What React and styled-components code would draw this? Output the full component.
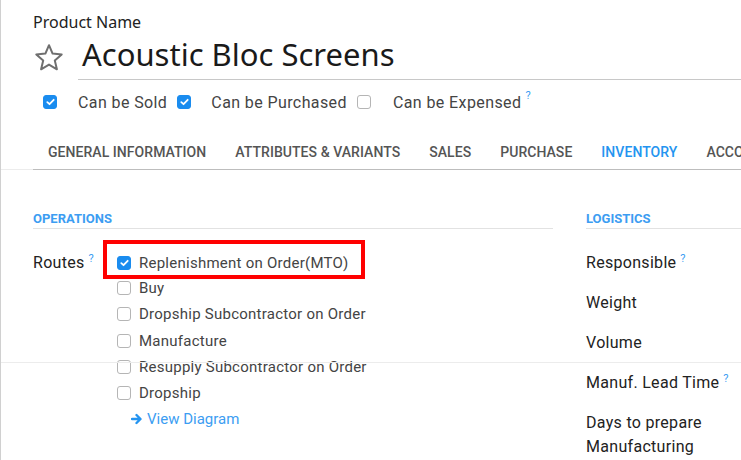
import styled, { createGlobalStyle } from 'styled-components'

const GlobalStyle = createGlobalStyle`
  html, body {
    margin: 0;
    padding: 0;
    background: #fff;
  }
  body {
    font-family: Roboto, "Liberation Sans", sans-serif;
    color: #222;
  }
`

const Page = styled.div`
  position: relative;
  width: 741px;
  height: 460px;
  overflow: hidden;
  box-sizing: border-box;
  border-left: 1px solid #d0d0d0;
  background: #fff;
`

const Seam = styled.div`
  position: absolute;
  left: 0;
  right: 0;
  top: 362px;
  height: 1px;
  background: #ececec;
`

const Head = styled.div`
  padding: 13px 0 0 32px;
`

const FieldLabel = styled.div`
  font-family: "Noto Sans", Roboto, sans-serif;
  font-size: 16px;
  line-height: 18px;
  color: #222;
`

const TitleRow = styled.div`
  display: flex;
  align-items: center;
  margin-top: 4px;
`

const Star = styled.svg`
  width: 32px;
  height: 32px;
  flex: none;
`

const Title = styled.div`
  flex: 1;
  margin-left: 13px;
  padding: 0 0 6px 4px;
  border-bottom: 1px solid #c8c8c8;
  font-family: "Noto Sans", Roboto, sans-serif;
  font-size: 31px;
  line-height: 38px;
  color: #1a1a1a;
`

const Flags = styled.div`
  display: flex;
  align-items: center;
  margin: 12px 0 0 10px;
  height: 20px;
`

const Box = styled.span`
  display: inline-flex;
  align-items: center;
  justify-content: center;
  width: 14px;
  height: 14px;
  box-sizing: border-box;
  flex: none;
  border-radius: 3px;
  border: 1px solid ${p => (p.$on ? '#1a8cef' : '#b5b5b5')};
  background: ${p => (p.$on ? '#1a8cef' : '#fff')};
`

const FlagText = styled.span`
  font-size: 16px;
  letter-spacing: 0.4px;
  color: #444;
  margin: 0 ${p => (p.$last ? 0 : 10)}px 0 ${p => p.$before || 21}px;
`

const Help = styled.span`
  font-size: 11px;
  line-height: 0;
  color: #3c9df2;
  margin-left: 4px;
  position: relative;
  top: -6px;
`

const TabsWrap = styled.div`
  margin-top: 23px;
  border-bottom: 1px solid #ececec;
`

const TabList = styled.div`
  display: flex;
  margin-left: 32px;
  margin-bottom: -1px;
  padding-left: 15px;
  gap: 29px;
  height: 34px;
  align-items: center;
  border-bottom: 1px solid #bdbdbd;
  white-space: nowrap;
`

const Tab = styled.div`
  font-size: 14px;
  font-weight: 500;
  letter-spacing: 0.05px;
  color: ${p => (p.$active ? '#2494f0' : '#555')};
`

const Body = styled.div`
  display: grid;
  grid-template-columns: 520px 1fr;
  column-gap: 33px;
  padding: 41px 0 0 32px;
`

const Group = styled.div``

const GroupTitle = styled.div`
  font-size: 13px;
  font-weight: 700;
  color: #3c9df2;
  padding-bottom: 1px;
  border-bottom: 1px solid #e2e2e2;
  line-height: 16px;
`

const RouteField = styled.div`
  display: grid;
  grid-template-columns: 84px 1fr;
  margin-top: 11px;
`

const Label = styled.div`
  font-size: 16px;
  letter-spacing: 0.3px;
  color: #222;
  line-height: 20px;
  padding-top: ${p => p.$top || 0}px;
`

const Options = styled.div`
  display: flex;
  flex-direction: column;
`

const Highlight = styled.div`
  margin: 0 0 -4px -14px;
  width: 262px;
  height: 39px;
  box-sizing: border-box;
  border: 4px solid #ff0000;
  padding: 6px 0 0 10px;
`

const Option = styled.div`
  display: flex;
  align-items: center;
  height: 26.3px;
  font-size: 15px;
  letter-spacing: 0.25px;
  color: #444;
  span + span {
    margin-left: 8px;
  }
`

const DiagramLink = styled.div`
  display: flex;
  align-items: center;
  height: 26px;
  margin-left: 14px;
  font-size: 15px;
  color: #3c9df2;
  svg {
    margin-right: 4px;
  }
`

const InfoList = styled.div`
  display: flex;
  flex-direction: column;
  margin-top: 22px;
`

const InfoRow = styled.div`
  font-size: 16px;
  letter-spacing: 0.3px;
  line-height: 24px;
  color: #222;
  min-height: 40px;
`

const Check = () => (
  <svg width="9" height="8" viewBox="0 0 9 8">
    <path d="M1.3 4.2 L3.5 6.2 L7.7 1.8" fill="none" stroke="#fff" strokeWidth="1.8" strokeLinecap="round" strokeLinejoin="round" />
  </svg>
)

const CheckBox = ({ on }) => <Box $on={on}>{on && <Check />}</Box>

const routes = [
  'Buy',
  'Dropship Subcontractor on Order',
  'Manufacture',
  'Resupply Subcontractor on Order',
  'Dropship',
]

export default function App() {
  return (
    <>
      <GlobalStyle />
      <Page>
        <Head>
          <FieldLabel>Product Name</FieldLabel>
          <TitleRow>
            <Star viewBox="0 0 32 32">
              <path
                d="M16 3.2 L19.6 11.6 L28.7 12.4 L21.8 18.4 L23.9 27.3 L16 22.6 L8.1 27.3 L10.2 18.4 L3.3 12.4 L12.4 11.6 Z"
                fill="none"
                stroke="#6f6f6f"
                strokeWidth="2"
                strokeLinejoin="round"
              />
            </Star>
            <Title>Acoustic Bloc Screens</Title>
          </TitleRow>
          <Flags>
            <CheckBox on />
            <FlagText>Can be Sold</FlagText>
            <CheckBox on />
            <FlagText $before={20}>Can be Purchased</FlagText>
            <CheckBox />
            <FlagText $before={22} $last>Can be Expensed</FlagText>
            <Help>?</Help>
          </Flags>
        </Head>

        <TabsWrap>
          <TabList>
            <Tab>GENERAL INFORMATION</Tab>
            <Tab>ATTRIBUTES &amp; VARIANTS</Tab>
            <Tab>SALES</Tab>
            <Tab>PURCHASE</Tab>
            <Tab $active>INVENTORY</Tab>
            <Tab>ACCOUNTING</Tab>
          </TabList>
        </TabsWrap>

        <Body>
          <Group>
            <GroupTitle>OPERATIONS</GroupTitle>
            <RouteField>
              <Label $top={13}>
                Routes<Help>?</Help>
              </Label>
              <Options>
                <Highlight>
                  <Option>
                    <CheckBox on />
                    <span>Replenishment on Order(MTO)</span>
                  </Option>
                </Highlight>
                {routes.map(r => (
                  <Option key={r}>
                    <CheckBox />
                    <span>{r}</span>
                  </Option>
                ))}
                <DiagramLink>
                  <svg width="12" height="12" viewBox="0 0 12 12">
                    <path d="M1 6 H9 M5.5 2 L9.5 6 L5.5 10" fill="none" stroke="#2494f0" strokeWidth="2.4" strokeLinecap="round" strokeLinejoin="round" />
                  </svg>
                  View Diagram
                </DiagramLink>
              </Options>
            </RouteField>
          </Group>

          <Group>
            <GroupTitle>LOGISTICS</GroupTitle>
            <InfoList>
              <InfoRow>
                Responsible<Help>?</Help>
              </InfoRow>
              <InfoRow>Weight</InfoRow>
              <InfoRow>Volume</InfoRow>
              <InfoRow>
                Manuf. Lead Time<Help>?</Help>
              </InfoRow>
              <InfoRow>
                Days to prepare
                <br />
                Manufacturing
              </InfoRow>
            </InfoList>
          </Group>
        </Body>
        <Seam />
      </Page>
    </>
  )
}
